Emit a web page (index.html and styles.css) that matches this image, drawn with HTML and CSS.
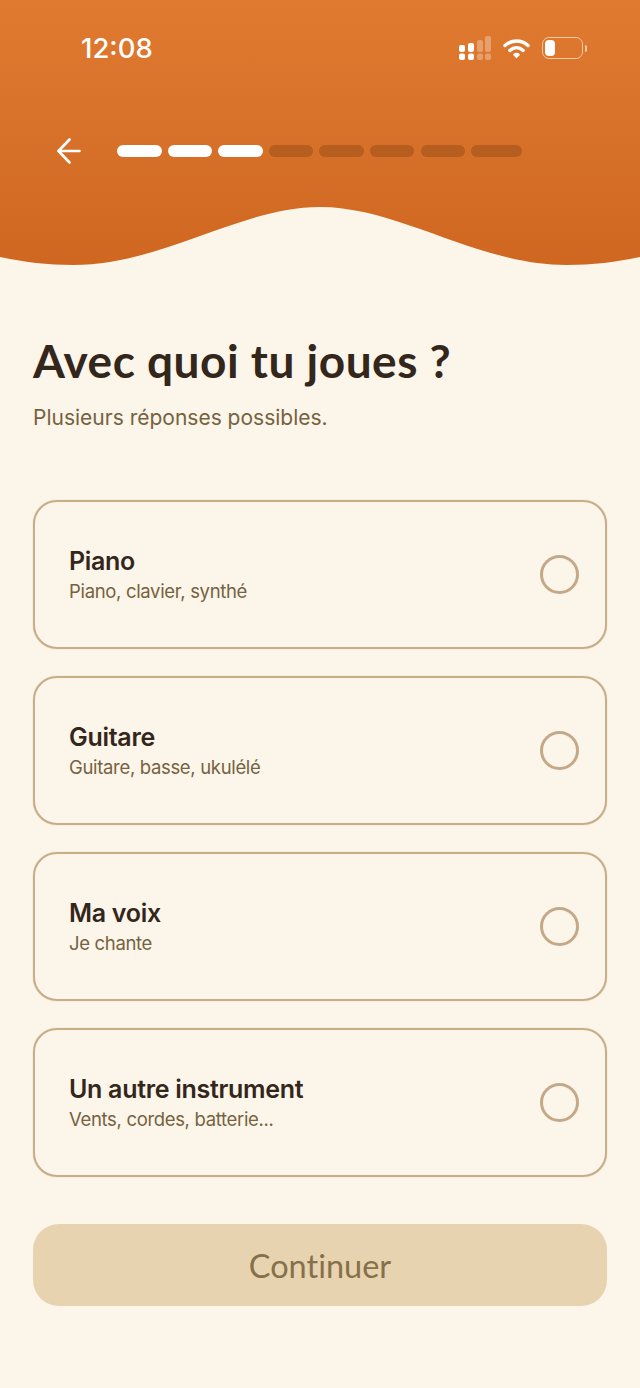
FILE: index.html
```html
<!DOCTYPE html>
<html lang="fr">
<head>
    <meta charset="UTF-8">
    <meta name="viewport" content="width=device-width, initial-scale=1.0">
    <title>Avec quoi tu joues ?</title>
    <link rel="stylesheet" href="styles.css">
</head>
<body>
    <header class="header">
        <div class="status-bar">
            <span class="time">12:08</span>
            <div class="status-icons">
                <svg class="signal" width="32" height="24" viewBox="0 0 32 24">
                    <rect x="0" y="9" width="6" height="7" rx="2" fill="#fff"/>
                    <rect x="0" y="17.5" width="6" height="6.5" rx="2" fill="#fff"/>
                    <rect x="9" y="7" width="6" height="9" rx="2" fill="#fff"/>
                    <rect x="9" y="17.5" width="6" height="6.5" rx="2" fill="#fff"/>
                    <rect x="18" y="4" width="6" height="12" rx="2" fill="#fff" opacity="0.3"/>
                    <rect x="18" y="17.5" width="6" height="6.5" rx="2" fill="#fff" opacity="0.3"/>
                    <rect x="26" y="0" width="6" height="16" rx="2" fill="#fff" opacity="0.3"/>
                    <rect x="26" y="17.5" width="6" height="6.5" rx="2" fill="#fff" opacity="0.3"/>
                </svg>
                <svg class="wifi" width="27" height="23" viewBox="0 0 27 23" fill="none" stroke="#fff" stroke-width="3.4" stroke-linecap="round">
                    <path d="M2 8.5C8.5 2.5 18.5 2.5 25 8.5"/>
                    <path d="M6.8 13.4C10.8 9.8 16.2 9.8 20.2 13.4"/>
                    <path d="M10.6 17.6L13.5 20.6L16.4 17.6C14.6 16.2 12.4 16.2 10.6 17.6Z" fill="#fff" stroke-width="1.2" stroke-linejoin="round"/>
                </svg>
                <div class="battery">
                    <div class="battery-box"><div class="battery-level"></div></div>
                    <div class="battery-nub"></div>
                </div>
            </div>
        </div>
        <div class="nav-row">
            <svg class="back" width="24" height="28" viewBox="0 0 24 28" fill="none" stroke="#fff" stroke-width="2.6" stroke-linecap="round" stroke-linejoin="round">
                <path d="M22.5 14H1.8"/>
                <path d="M12.5 2.5L1.5 14L12.5 25.5"/>
            </svg>
            <div class="progress">
                <div class="seg done"></div>
                <div class="seg done"></div>
                <div class="seg done"></div>
                <div class="seg"></div>
                <div class="seg"></div>
                <div class="seg"></div>
                <div class="seg"></div>
                <div class="seg last"></div>
            </div>
        </div>
    </header>

    <main class="content">
        <h1>Avec quoi tu joues ?</h1>
        <p class="hint">Plusieurs réponses possibles.</p>

        <div class="options">
            <div class="option">
                <div>
                    <div class="option-name">Piano</div>
                    <div class="option-desc">Piano, clavier, synthé</div>
                </div>
                <div class="radio"></div>
            </div>
            <div class="option">
                <div>
                    <div class="option-name">Guitare</div>
                    <div class="option-desc">Guitare, basse, ukulélé</div>
                </div>
                <div class="radio"></div>
            </div>
            <div class="option">
                <div>
                    <div class="option-name">Ma voix</div>
                    <div class="option-desc">Je chante</div>
                </div>
                <div class="radio"></div>
            </div>
            <div class="option">
                <div>
                    <div class="option-name">Un autre instrument</div>
                    <div class="option-desc">Vents, cordes, batterie...</div>
                </div>
                <div class="radio"></div>
            </div>
        </div>

        <button class="continue-button">Continuer</button>
    </main>
</body>
</html>
```

FILE: styles.css
```css
* {
    box-sizing: border-box;
}

body {
    font-family: Inter, "Liberation Sans", sans-serif;
    background-color: #fcf5ea;
    margin: 0;
    color: #33261a;
}

.header {
    height: 266px;
    background: linear-gradient(180deg, #e07a31 0%, #cf6720 100%);
    clip-path: path("M0 0H640V257C617 262 592 265 567 265C477 265 400 207 320 207C240 207 163 265 73 265C48 265 23 262 0 257Z");
}

.status-bar {
    display: flex;
    justify-content: space-between;
    align-items: center;
    height: 96px;
    padding: 0 53px 0 81px;
}

.time {
    font-size: 27.5px;
    font-weight: 500;
    color: #fff;
}

.status-icons {
    display: flex;
    align-items: center;
    gap: 12px;
}

.battery {
    display: flex;
    align-items: center;
    gap: 2px;
}

.battery-box {
    width: 41px;
    height: 22px;
    border: 1.5px solid #f7c9a0;
    border-radius: 7px;
    padding: 2px;
}

.battery-level {
    width: 10px;
    height: 100%;
    background-color: #fff;
    border-radius: 4px;
}

.battery-nub {
    width: 2px;
    height: 7px;
    background-color: #f7c9a0;
    border-radius: 0 2px 2px 0;
}

.nav-row {
    display: flex;
    align-items: center;
    height: 28px;
    margin-top: 41px;
    padding-left: 57px;
}

.back {
    margin-right: 36px;
}

.progress {
    display: flex;
    gap: 6.1px;
}

.seg {
    width: 44.5px;
    height: 12px;
    border-radius: 6px;
    background-color: #b55e20;
}

.seg.done {
    background-color: #fff;
}

.seg.last {
    width: 51px;
}

.content {
    padding: 0 33px;
}

h1 {
    font-family: Lato, "Liberation Sans", sans-serif;
    font-size: 46px;
    font-weight: 700;
    line-height: 56px;
    letter-spacing: 0.5px;
    margin: 67px 0 0;
}

.hint {
    font-size: 21px;
    line-height: 28px;
    color: #75623f;
    margin: 15px 0 0;
}

.options {
    display: flex;
    flex-direction: column;
    gap: 27px;
    margin-top: 68px;
}

.option {
    display: flex;
    justify-content: space-between;
    align-items: center;
    height: 149px;
    padding: 0 26px 0 34px;
    border: 2px solid #c9ac88;
    border-radius: 24px;
    box-shadow: 0 0 1px #c9ac88;
}

.option-name {
    font-size: 25px;
    font-weight: 600;
    line-height: 30px;
    letter-spacing: -0.3px;
    margin-bottom: 2px;
}

.option-desc {
    font-size: 18.5px;
    line-height: 26px;
    letter-spacing: -0.33px;
    color: #75623f;
}

.radio {
    width: 39px;
    height: 39px;
    border: 3px solid #c4a988;
    border-radius: 50%;
}

.continue-button {
    display: block;
    width: 100%;
    height: 82px;
    margin-top: 47px;
    background-color: #e8d3b0;
    border: none;
    border-radius: 26px;
    font-family: Lato, "Liberation Sans", sans-serif;
    font-size: 32.5px;
    font-variant-ligatures: none;
    color: #86704a;
}
```
